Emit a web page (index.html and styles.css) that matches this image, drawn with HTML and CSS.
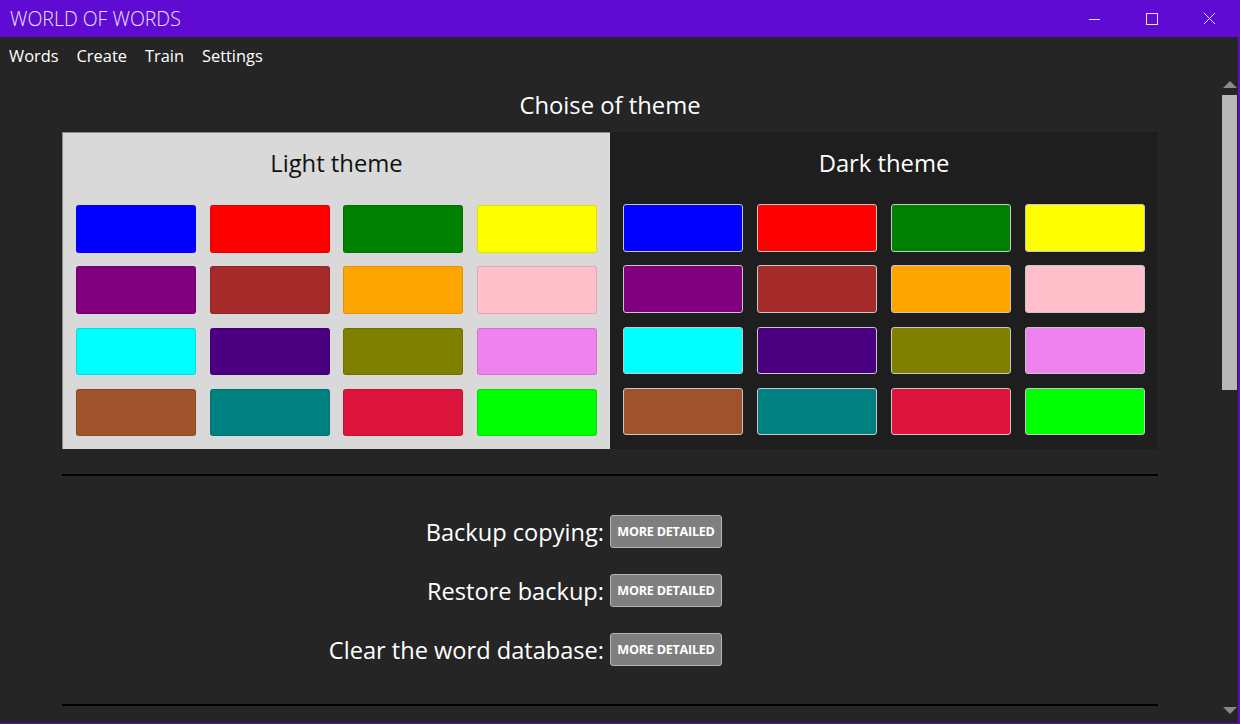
FILE: index.html
```html
<!DOCTYPE html>
<html>
<head>
<meta charset="utf-8">
<link rel="stylesheet" href="styles.css">
</head>
<body>
<div class="window">
  <div class="titlebar">
    <div class="title">WORLD OF WORDS</div>
    <div class="controls">
      <span class="ctl"><svg width="12" height="12" viewBox="0 0 12 12"><line x1="1" y1="6.5" x2="13" y2="6.5" stroke="#e8e0f8" stroke-width="1"/></svg></span>
      <span class="ctl"><svg width="12" height="12" viewBox="0 0 12 12"><rect x="0.5" y="0.5" width="11" height="11" fill="none" stroke="#e8e0f8" stroke-width="1"/></svg></span>
      <span class="ctl"><svg width="13" height="13" viewBox="0 0 13 13"><path d="M1 1L12 12M12 1L1 12" stroke="#e8e0f8" stroke-width="1"/></svg></span>
    </div>
  </div>
  <div class="menubar">
    <span class="menu-item">Words</span>
    <span class="menu-item">Create</span>
    <span class="menu-item">Train</span>
    <span class="menu-item">Settings</span>
  </div>
  <div class="body">
    <div class="main">
      <h2 class="section-title">Choise of theme</h2>
      <div class="themes">
        <div class="theme light">
          <div class="theme-title">Light theme</div>
          <div class="swatches">
            <div class="sw" style="background:#0000ff"></div>
            <div class="sw" style="background:#ff0000"></div>
            <div class="sw" style="background:#008000"></div>
            <div class="sw" style="background:#ffff00"></div>
            <div class="sw" style="background:#800080"></div>
            <div class="sw" style="background:#a52a2a"></div>
            <div class="sw" style="background:#ffa500"></div>
            <div class="sw" style="background:#ffc0cb"></div>
            <div class="sw" style="background:#00ffff"></div>
            <div class="sw" style="background:#4b0082"></div>
            <div class="sw" style="background:#808000"></div>
            <div class="sw" style="background:#ee82ee"></div>
            <div class="sw" style="background:#a0522d"></div>
            <div class="sw" style="background:#008080"></div>
            <div class="sw" style="background:#dc143c"></div>
            <div class="sw" style="background:#00ff00"></div>
          </div>
        </div>
        <div class="theme dark">
          <div class="theme-title">Dark theme</div>
          <div class="swatches">
            <div class="sw" style="background:#0000ff"></div>
            <div class="sw" style="background:#ff0000"></div>
            <div class="sw" style="background:#008000"></div>
            <div class="sw" style="background:#ffff00"></div>
            <div class="sw" style="background:#800080"></div>
            <div class="sw" style="background:#a52a2a"></div>
            <div class="sw" style="background:#ffa500"></div>
            <div class="sw" style="background:#ffc0cb"></div>
            <div class="sw" style="background:#00ffff"></div>
            <div class="sw" style="background:#4b0082"></div>
            <div class="sw" style="background:#808000"></div>
            <div class="sw" style="background:#ee82ee"></div>
            <div class="sw" style="background:#a0522d"></div>
            <div class="sw" style="background:#008080"></div>
            <div class="sw" style="background:#dc143c"></div>
            <div class="sw" style="background:#00ff00"></div>
          </div>
        </div>
      </div>
      <div class="sep"></div>
      <div class="actions">
        <div class="label">Backup copying:</div><div><button class="btn">MORE DETAILED</button></div>
        <div class="label">Restore backup:</div><div><button class="btn">MORE DETAILED</button></div>
        <div class="label">Clear the word database:</div><div><button class="btn">MORE DETAILED</button></div>
      </div>
      <div class="sep sep2"></div>
    </div>
    <div class="scrollbar">
      <div class="arrow up"></div>
      <div class="track"><div class="thumb"></div></div>
      <div class="arrow down"></div>
    </div>
  </div>
</div>
</body>
</html>
```
FILE: styles.css
```css
* { box-sizing: border-box; }
html, body { margin: 0; padding: 0; }
body {
  width: 1240px;
  height: 724px;
  overflow: hidden;
  background: #252525;
  font-family: "Open Sans", "Noto Sans", sans-serif;
  color: #ffffff;
}
.window {
  width: 1240px;
  height: 724px;
  display: flex;
  flex-direction: column;
  border-right: 2px solid #5f0bd3;
  border-bottom: 1px solid #5f0bd3;
  background: #252525;
}
.titlebar {
  height: 37px;
  flex: none;
  background: #5f0bd3;
  display: flex;
  align-items: center;
  justify-content: space-between;
}
.title {
  padding-left: 10px;
  font-size: 19.5px;
  font-weight: 300;
  color: #ece4fa;
}
.controls { display: flex; height: 100%; }
.ctl {
  width: 58px;
  display: flex;
  align-items: center;
  justify-content: center;
}
.ctl:last-child { width: 56px; margin-right: 1px; }
.menubar {
  height: 38px;
  flex: none;
  display: flex;
  align-items: center;
  padding-left: 9px;
  gap: 18px;
  font-size: 16.4px;
  padding-bottom: 1px;
}
.body {
  flex: 1;
  display: flex;
  min-height: 0;
}
.main {
  flex: 1;
  padding: 0 62px;
  overflow: hidden;
}
.section-title {
  margin: 0;
  height: 57px;
  padding-top: 14px;
  text-align: center;
  font-weight: 400;
  font-size: 23.8px;
}
.themes {
  display: grid;
  grid-template-columns: 1fr 1fr;
  height: 317px;
}
.theme {
  padding: 0 13px;
}
.theme.light {
  background: #d9d9d9;
  color: #111;
  border-left: 1px solid #8a8a8a;
  border-top: 1px solid #8a8a8a;
}
.theme.dark {
  background: #1e1e1e;
  color: #fff;
}
.theme-title {
  height: 72px;
  padding-top: 14px;
  text-align: center;
  font-size: 23.8px;
}
.theme.dark .theme-title { padding-top: 15px; height: 72px; }
.swatches {
  display: grid;
  grid-template-columns: repeat(4, 1fr);
  column-gap: 13.5px;
  row-gap: 13.8px;
  grid-auto-rows: 47.5px;
}
.sw {
  border-radius: 3px;
  border: 1px solid rgba(0,0,0,0.12);
}
.theme.dark .sw {
  border: 1px solid #c8c8c8;
}
.sep {
  height: 2px;
  background: #000;
  margin-top: 25px;
}
.actions {
  display: grid;
  grid-template-columns: 1fr 1fr;
  grid-auto-rows: 33px;
  row-gap: 26px;
  margin-top: 39px;
  align-items: start;
}
.label {
  text-align: right;
  padding-right: 6px;
  height: 33px;
  font-size: 23.6px;
  line-height: 35px;
}
.btn {
  height: 33px;
  width: 112px;
  background: #7f7f7f;
  border: 1px solid #b4b4b4;
  border-radius: 3px;
  color: #fff;
  font-family: "Open Sans", "Noto Sans", sans-serif;
  font-weight: 700;
  font-size: 12.6px;
  letter-spacing: -0.25px;
  padding: 0;
  display: block;
}
.sep2 { margin-top: 38px; }
.scrollbar {
  width: 18px;
  flex: none;
  display: flex;
  flex-direction: column;
  align-items: center;
  padding-top: 6px;
}
.arrow {
  width: 0;
  height: 0;
  border-left: 7px solid transparent;
  border-right: 7px solid transparent;
  flex: none;
}
.arrow.up { border-bottom: 7px solid #8a8a8a; margin-left: 1px; }
.arrow.down { border-top: 7px solid #8a8a8a; margin-bottom: 9px; margin-left: 1px; }
.track {
  flex: 1;
  width: 100%;
  padding-top: 7px;
}
.thumb {
  width: 15px;
  margin-left: 2px;
  height: 295px;
  background: #b8b8b8;
}
```
